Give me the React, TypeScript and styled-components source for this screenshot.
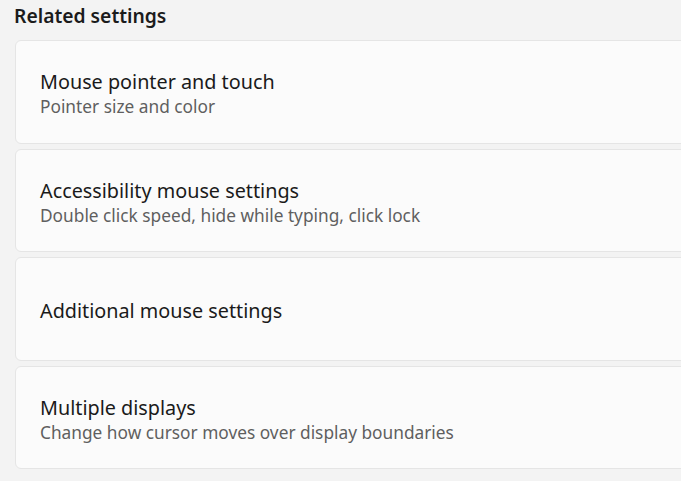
import React from "react";
import styled, { createGlobalStyle } from "styled-components";

const Global = createGlobalStyle`
  html, body { margin: 0; padding: 0; background: #f3f3f3; }
  body { font-family: "Noto Sans", "Open Sans", sans-serif; }
`;

const Page = styled.div`
  width: 681px;
  height: 481px;
  overflow: hidden;
  background: #f3f3f3;
  padding: 3px 0 0 14px;
  box-sizing: border-box;
`;

const Heading = styled.h2`
  margin: 0;
  font-size: 19.3px;
  font-weight: 600;
  color: #1b1b1b;
  line-height: 26px;
  height: 37px;
`;

const List = styled.div`
  display: flex;
  flex-direction: column;
  gap: 5px;
  margin-left: 1px;
`;

const Card = styled.div`
  width: 720px;
  height: 103.5px;
  box-sizing: border-box;
  background: #fbfbfb;
  border: 1px solid #e5e5e5;
  border-radius: 6px;
  padding: 4px 0 0 24px;
  display: flex;
  flex-direction: column;
  justify-content: center;
`;

const Title = styled.div`
  font-size: 19.8px;
  color: #1a1a1a;
  line-height: 26px;
`;

const Sub = styled.div`
  font-size: 17.3px;
  color: #5f5f5f;
  line-height: 23px;
`;

const items = [
  { t: "Mouse pointer and touch", s: "Pointer size and color" },
  { t: "Accessibility mouse settings", s: "Double click speed, hide while typing, click lock" },
  { t: "Additional mouse settings" },
  { t: "Multiple displays", s: "Change how cursor moves over display boundaries" },
];

export default function App() {
  return (
    <Page>
      <Global />
      <Heading>Related settings</Heading>
      <List>
        {items.map((it) => (
          <Card key={it.t}>
            <Title>{it.t}</Title>
            {it.s && <Sub>{it.s}</Sub>}
          </Card>
        ))}
      </List>
    </Page>
  );
}
